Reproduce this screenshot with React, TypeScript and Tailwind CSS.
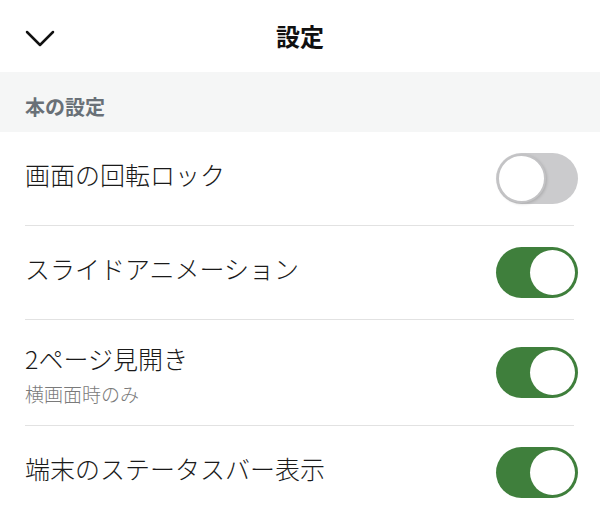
import React from "react";

function Toggle({ on }: { on: boolean }) {
  if (on) {
    return (
      <div className="relative h-[51px] w-[82px] shrink-0 rounded-full bg-[#3f7f3c]">
        <div className="absolute right-[3px] top-[3px] h-[45px] w-[45px] rounded-full bg-white" />
      </div>
    );
  }
  return (
    <div className="relative h-[51px] w-[82px] shrink-0 rounded-full bg-[#cbcbcd]">
      <div className="absolute left-[1px] top-[1px] h-[49px] w-[49px] rounded-full border-[2px] border-[#c3c3c5] bg-white shadow-[1px_1px_3px_rgba(0,0,0,0.15)]" />
    </div>
  );
}

function Row({ title, sub, on }: { title: string; sub?: string; on: boolean }) {
  return (
    <div className={`flex items-center justify-between pl-[25px] pr-[22px] ${sub ? "h-[105px]" : "h-[93px]"}`}>
      <div className={`flex flex-col ${sub ? "pt-[2px]" : "pb-[9px]"}`}>
        <div className="text-[25px] font-light leading-[32px] text-[#1a1a1a]">{title}</div>
        {sub && <div className="mt-[8px] text-[19px] font-light leading-[24px] text-[#7a7a7a]">{sub}</div>}
      </div>
      <Toggle on={on} />
    </div>
  );
}

function Divider() {
  return <div className="ml-[25px] mr-[26px] h-px bg-[#e2e2e2]" />;
}

export default function App() {
  return (
    <div
      className="h-[518px] w-[600px] overflow-hidden bg-white"
      style={{ fontFamily: '"Noto Sans CJK JP", "Noto Sans", sans-serif' }}
    >
      <div className="relative flex h-[72px] items-center justify-center">
        <svg
          className="absolute left-[25px] top-[30px]"
          width="30"
          height="18"
          viewBox="0 0 30 18"
          fill="none"
          stroke="#111"
          strokeWidth="2.5"
          strokeLinecap="round"
          strokeLinejoin="round"
        >
          <path d="M2 2 L15 15 L28 2" />
        </svg>
        <div className="text-[24px] font-bold text-[#111]">設定</div>
      </div>
      <div className="flex h-[60px] items-center bg-[#f5f6f6] pl-[25px] pt-[10px]">
        <div className="text-[20px] font-bold text-[#697077]">本の設定</div>
      </div>
      <Row title="画面の回転ロック" on={false} />
      <Divider />
      <Row title="スライドアニメーション" on={true} />
      <Divider />
      <Row title="2ページ見開き" sub="横画面時のみ" on={true} />
      <Divider />
      <Row title="端末のステータスバー表示" on={true} />
    </div>
  );
}
